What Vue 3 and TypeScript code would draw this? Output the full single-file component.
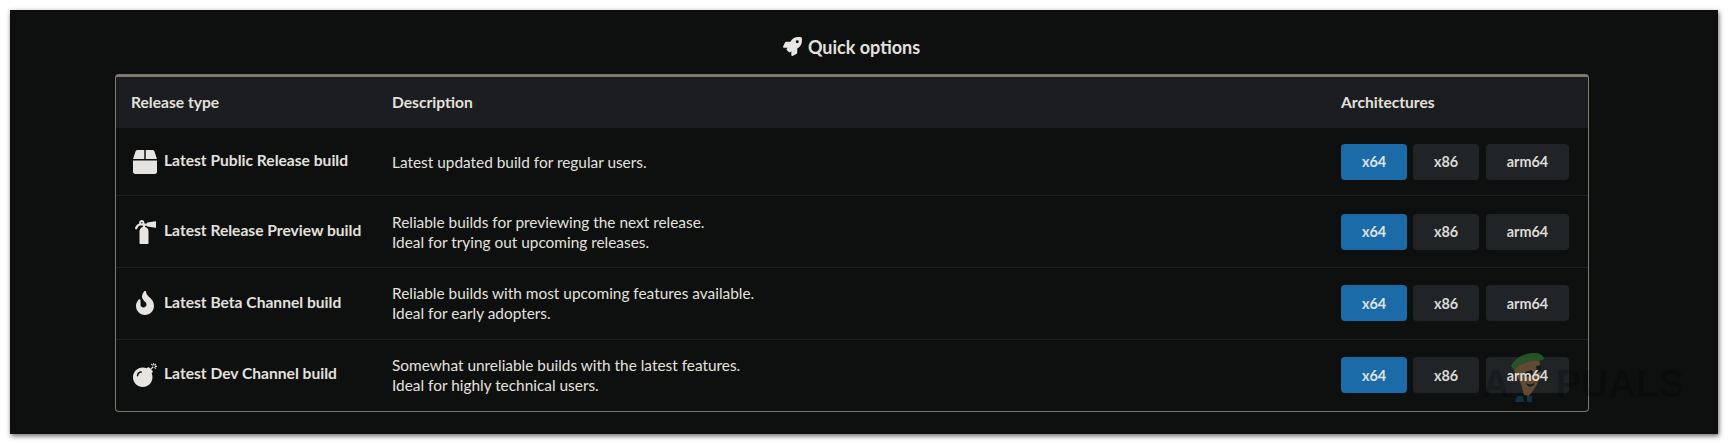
<script setup lang="ts">
interface Build {
  name: string;
  icon: string;
  viewBox: string;
  lines: string[];
}

const box =
  "M509.5 184.6L458.9 32.8C452.4 13.2 434.1 0 413.4 0H272v192h238.7c-.4-2.5-.4-5-1.2-7.4zM240 0H98.6c-20.7 0-39 13.2-45.5 32.8L2.5 184.6c-.8 2.4-.8 4.9-1.2 7.4H240V0zM0 224v240c0 26.5 21.5 48 48 48h416c26.5 0 48-21.5 48-48V224H0z";
const extinguisher =
  "M434.027 26.329l-168 28C254.693 56.218 256 67.8 256 72h-58.332C208.353 36.108 181.446 0 144 0c-39.435 0-66.368 39.676-52.228 76.203-52.039 13.051-75.381 54.213-90.049 90.884-4.923 12.307 1.063 26.274 13.37 31.197 12.317 4.926 26.279-1.075 31.196-13.37C75.058 112.99 106.964 120 168 120v27.076c-41.543 10.862-72 49.235-72 94.129V488c0 13.255 10.745 24 24 24h144c13.255 0 24-10.745 24-24V240c0-44.731-30.596-82.312-72-92.97V120h40c0 2.974-1.703 15.716 10.027 17.671l168 28C441.333 166.889 448 161.4 448 153.999V41.997c0-7.4-6.66-16.9-13.973-15.668zM144 72c-8.822 0-16-7.178-16-16s7.178-16 16-16 16 7.178 16 16-7.178 16-16 16z";
const fire =
  "M216 23.86c0-23.8-30.65-32.77-44.15-13.04C48 191.85 224 200 224 288c0 35.63-29.11 64.46-64.85 63.99-35.17-.45-63.15-29.77-63.15-64.94v-85.51c0-21.7-26.47-32.23-41.43-16.5C27.8 213.16 0 261.33 0 320c0 105.87 86.13 192 192 192s192-86.13 192-192c0-170.29-168-193-168-296.14z";
const bomb =
  "M440.5 88.5l-52 52L415 167c9.4 9.4 9.4 24.6 0 33.9l-17.4 17.4c11.8 26.1 18.4 55.1 18.4 85.6 0 114.9-93.1 208-208 208S0 418.9 0 304 93.1 96 208 96c30.5 0 59.5 6.6 85.6 18.4L311 97c9.4-9.4 24.6-9.4 33.9 0l26.5 26.5 52-52 17.1 17zM500 60h-24c-6.6 0-12 5.4-12 12s5.4 12 12 12h24c6.6 0 12-5.4 12-12s-5.4-12-12-12zM440 0c-6.6 0-12 5.4-12 12v24c0 6.6 5.4 12 12 12s12-5.4 12-12V12c0-6.6-5.4-12-12-12zm33.9 55l17-17c4.7-4.7 4.7-12.3 0-17-4.7-4.7-12.3-4.7-17 0l-17 17c-4.7 4.7-4.7 12.3 0 17 4.8 4.7 12.4 4.7 17 0zm-67.8 0c4.7 4.7 12.3 4.7 17 0 4.7-4.7 4.7-12.3 0-17l-17-17c-4.7-4.7-12.3-4.7-17 0-4.7 4.7-4.7 12.3 0 17l17 17zm67.8 34c-4.7-4.7-12.3-4.7-17 0-4.7 4.7-4.7 12.3 0 17l17 17c4.7 4.7 12.3 4.7 17 0 4.7-4.7 4.7-12.3 0-17l-17-17zM112 272c0-35.3 28.7-64 64-64 8.8 0 16-7.2 16-16s-7.2-16-16-16c-52.9 0-96 43.1-96 96 0 8.8 7.2 16 16 16s16-7.2 16-16z";
const rocket =
  "M505.12 19.09c-1.19-5.53-6.66-11-12.21-12.19C460.72 0 435.51 0 410.41 0 307.18 0 245.27 55.2 199.05 128H94.84c-16.35.02-35.56 11.88-42.89 26.48L2.52 253.3A28.4 28.4 0 0 0 0 264a24 24 0 0 0 24 24h103.81l-22.47 22.47c-11.37 11.36-13 32.26 0 45.25l50.9 50.91c11.16 11.19 32.16 13.16 45.28 0l22.48-22.47V488a24 24 0 0 0 24 24 28.56 28.56 0 0 0 10.71-2.52l98.73-49.39c14.63-7.3 26.51-26.5 26.51-42.86V312.8c72.6-46.31 128.03-108.41 128.03-211.1.01-25.2.01-50.4-6.95-82.61zM384.04 168a40 40 0 1 1 40.01-40 40.02 40.02 0 0 1-40.01 40z";

const builds: Build[] = [
  {
    name: "Latest Public Release build",
    icon: box,
    viewBox: "0 0 512 512",
    lines: ["Latest updated build for regular users."],
  },
  {
    name: "Latest Release Preview build",
    icon: extinguisher,
    viewBox: "0 0 448 512",
    lines: ["Reliable builds for previewing the next release.", "Ideal for trying out upcoming releases."],
  },
  {
    name: "Latest Beta Channel build",
    icon: fire,
    viewBox: "0 0 384 512",
    lines: ["Reliable builds with most upcoming features available.", "Ideal for early adopters."],
  },
  {
    name: "Latest Dev Channel build",
    icon: bomb,
    viewBox: "0 0 512 512",
    lines: ["Somewhat unreliable builds with the latest features.", "Ideal for highly technical users."],
  },
];
</script>

<template>
  <div class="page">
    <div class="panel">
      <h3 class="title">
        <svg class="title-icon" viewBox="0 0 512 512"><path :d="rocket" /></svg>
        Quick options
      </h3>

      <div class="table">
        <div class="row head">
          <div>Release type</div>
          <div>Description</div>
          <div>Architectures</div>
        </div>

        <div v-for="build in builds" :key="build.name" class="row body">
          <div class="name">
            <span class="icon-box">
              <svg class="icon" :viewBox="build.viewBox"><path :d="build.icon" /></svg>
            </span>
            <span class="name-text">{{ build.name }}</span>
          </div>
          <div class="desc">
            <div v-for="line in build.lines" :key="line">{{ line }}</div>
          </div>
          <div class="arch">
            <button class="btn primary"><span>x64</span></button>
            <button class="btn"><span>x86</span></button>
            <button class="btn wide"><span>arm64</span></button>
          </div>
        </div>
      </div>

      <!-- site watermark, sits over the table corner -->
      <div class="watermark">
        <span class="wm-text">A</span>
        <svg class="wm-face" viewBox="0 0 33 49">
          <path d="M0 13C4 5 13 0 24 0c5 0 8 2 9 6l-5 2C19 7 8 10 3 17z" fill="#2a5c2a" />
          <path d="M3 17C8 10 19 7 28 8l3 8-3 10c-2 7-6 12-10 17l-5-1-3-11-4-8z" fill="#6d5136" />
          <path d="M14 19l7-2 2 5-7 2zM25 13l5-1 1 6-5 2z" fill="#18191a" />
          <path d="M15 30c3 2 7 2 9-1-1 5-7 7-9 1z" fill="#16171a" />
          <path d="M6 43l6 0 1 6H4zM16 43l5 0v6h-5z" fill="#12384a" />
        </svg>
        <span class="wm-text pu">PUALS</span>
      </div>
    </div>
  </div>
</template>

<style>
html,
body {
  background: #fff;
}
</style>

<style scoped>
.page {
  width: 1729px;
  height: 445px;
  box-sizing: border-box;
  padding: 10px 11px 11px 10px;
  overflow: hidden;
  font-family: Lato, "Liberation Sans", sans-serif;
  color: #e3e1dd;
}

.panel {
  position: relative;
  height: 100%;
  box-sizing: border-box;
  padding: 0 129px 0 105px;
  background: #0e1010;
  box-shadow: 1px 2px 5px rgba(0, 0, 0, 0.6);
}

.title {
  display: flex;
  align-items: center;
  justify-content: center;
  gap: 6px;
  height: 64px;
  margin: 0;
  padding: 9px 1px 0 0;
  box-sizing: border-box;
  font-size: 18px;
  font-weight: 700;
}

.title-icon {
  width: 19px;
  height: 19px;
  fill: #e8e6e3;
}

.table {
  border: 1px solid #7f786c;
  border-top-width: 3px;
  border-radius: 4px;
  overflow: hidden;
}

.row {
  display: grid;
  grid-template-columns: 261px 949px 1fr;
  align-items: center;
  padding-left: 15px;
}

.row + .row {
  border-top: 1px solid #1d1f21;
}

.head {
  height: 50px;
  background: #1c1d20;
  font-size: 15.6px;
  font-weight: 700;
}

.body {
  height: 70.8px;
  font-size: 15.4px;
  line-height: 20px;
}

.body:nth-child(2) {
  height: 67px;
}

.body:nth-child(3) {
  height: 71px;
}

.name {
  display: flex;
  align-items: center;
  font-size: 15.6px;
  font-weight: 700;
}

.name-text {
  position: relative;
  top: -2px;
}

.body:nth-child(4) .name-text {
  top: -1px;
}

.icon-box {
  display: flex;
  justify-content: center;
  width: 28px;
  margin-right: 5px;
}

.icon {
  height: 24px;
  fill: #e6e4e1;
}

.arch {
  display: flex;
  gap: 6px;
}

.btn {
  width: 66px;
  height: 36px;
  padding: 0;
  border: 0;
  border-radius: 4px;
  background: #212427;
  color: #dcdad6;
  font: 700 14.4px Lato, "Liberation Sans", sans-serif;
}

.btn span {
  position: relative;
  z-index: 2;
}

.btn.primary {
  background: #1a6ba8;
  color: #dfe3e6;
}

.btn.wide {
  width: 83px;
  margin-left: 1px;
}

.watermark {
  position: absolute;
  z-index: 1;
  left: 1472px;
  top: 343px;
  display: flex;
  align-items: center;
  height: 49px;
  pointer-events: none;
}

.wm-text {
  font: 700 38px "Liberation Sans", sans-serif;
  color: rgba(0, 0, 0, 0.22);
  margin-top: 14px;
}

.wm-face {
  width: 33px;
  height: 49px;
  margin-left: 2px;
  opacity: 0.85;
}

.wm-text.pu {
  margin-left: 11px;
}
</style>
